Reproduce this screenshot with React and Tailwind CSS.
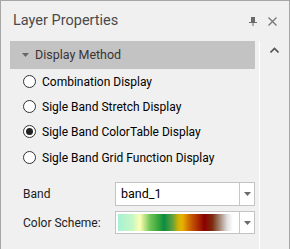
import React from 'react';

const Radio = ({ label, checked }) => (
  <div className="flex items-center h-[25px]">
    <span className="w-[13px] h-[13px] rounded-full border border-[#333] bg-white flex items-center justify-center">
      {checked && <span className="w-[7px] h-[7px] rounded-full bg-[#222]" />}
    </span>
    <span className="ml-[6px] text-[12px] text-black leading-none">{label}</span>
  </div>
);

const ComboArrow = () => (
  <div className="w-[15px] h-full border-l border-[#c8c8c8] flex items-center justify-center">
    <svg width="7" height="4" viewBox="0 0 7 4"><path d="M0 0h7L3.5 4z" fill="#6a6a6a" /></svg>
  </div>
);

export default function App() {
  return (
    <div className="w-[290px] h-[249px] bg-[#f0f0f0] border border-b-0 border-[#a6a6a6] flex flex-col font-['Roboto',sans-serif]">
      <div className="h-[40px] flex items-center pl-[12px] pr-[12px]">
        <span className="text-[14.5px] text-[#4a4a4a] flex-1">Layer Properties</span>
        <svg width="8" height="9" viewBox="0 0 8 9" className="mr-[11px] mt-[1px]">
          <path d="M2 0h4v5H2zM0 5h8v1H0zM3.5 6h1v3h-1z" fill="#6a6a6a" />
        </svg>
        <svg width="9" height="9" viewBox="0 0 9 9">
          <path d="M0.5 0.5l8 8M8.5 0.5l-8 8" stroke="#777" strokeWidth="1.3" />
        </svg>
      </div>
      <div className="flex flex-1">
        <div className="w-[258px] pl-[9px] pr-[4px]">
          <div className="h-[28px] bg-[#c3c3c3] flex items-center pl-[12px]">
            <svg width="7" height="4" viewBox="0 0 7 4"><path d="M0 0h7L3.5 4z" fill="#666" /></svg>
            <span className="ml-[6px] text-[12.5px] text-[#3a3434]">Display Method</span>
          </div>
          <div className="pl-[13px]">
            <Radio label="Combination Display" />
            <Radio label="Sigle Band Stretch Display" />
            <Radio label="Sigle Band ColorTable Display" checked />
            <div className="mt-[1px]">
              <Radio label="Sigle Band Grid Function Display" />
            </div>
          </div>
          <div className="pl-[13px] mt-[12px] flex flex-col gap-[5px]">
            <div className="flex items-center">
              <span className="w-[94px] text-[12px] text-[#222]">Band</span>
              <div className="w-[143px] h-[24px] bg-white border border-[#c3c3c3] flex">
                <span className="flex-1 pl-[5px] text-[12.5px] text-black leading-[22px]">band_1</span>
                <ComboArrow />
              </div>
            </div>
            <div className="flex items-center">
              <span className="w-[94px] text-[12px] text-[#222]">Color Scheme:</span>
              <div className="w-[143px] h-[23px] bg-white border border-[#c3c3c3] flex items-center">
                <div className="flex-1 h-full py-[2px] pl-[2px] pr-[6px]">
                  <div className="h-full bg-[linear-gradient(to_right,#a8f0d4_0%,#c6f8c4_13%,#ffffb4_19%,#70c458_28%,#48b040_33%,#0c8c40_40%,#5ca040_47%,#d8b400_53%,#e8b000_56%,#c86000_63%,#a82800_70%,#8b0000_75%,#7c2c0c_82%,#a08070_88%,#e0e0e0_95%,#ffffff_100%)]" />
                </div>
                <ComboArrow />
              </div>
            </div>
          </div>
        </div>
        <div className="w-[1px] bg-white" />
        <div className="flex-1 flex justify-center pt-[6px]">
          <svg width="9" height="6" viewBox="0 0 9 6"><path d="M0.5 5.5l4-4 4 4" stroke="#555" strokeWidth="1.6" fill="none" /></svg>
        </div>
      </div>
    </div>
  );
}
